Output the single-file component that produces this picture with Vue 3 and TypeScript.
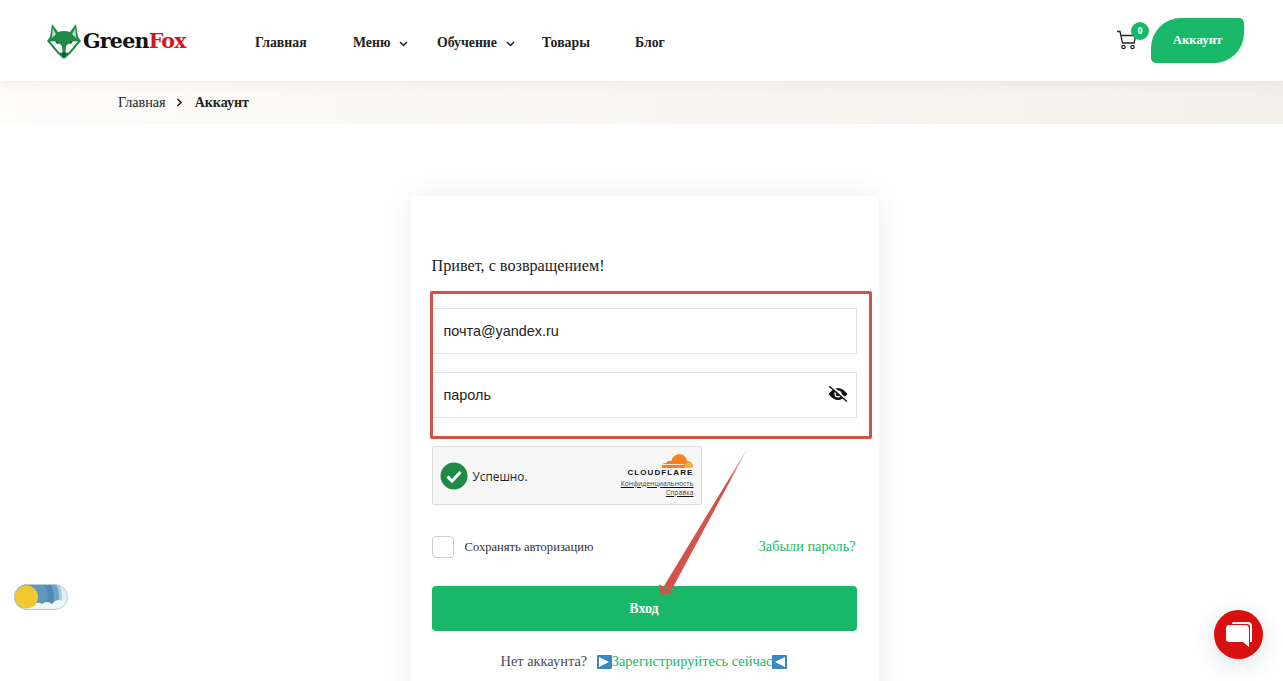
<script setup lang="ts">
interface NavItem {
  label: string
  caret?: boolean
}

const navItems: NavItem[] = [
  { label: 'Главная' },
  { label: 'Меню', caret: true },
  { label: 'Обучение', caret: true },
  { label: 'Товары' },
  { label: 'Блог' },
]
</script>

<template>
  <div class="page">
    <header class="header">
      <a class="logo">
        <svg class="fox" width="34" height="35" viewBox="0 0 34 35">
          <path d="M5 0 L11 8 Q17 6 23 8 L29 0 L31 13 L34 17 L23 30 L17 35 L11 30 L0 17 L3 13 Z" fill="#1f8a45" />
          <path d="M5.5 4 L9 10 L5 14 Z M28.5 4 L25 10 L29 14 Z" fill="#fff" opacity="0.7" />
          <path d="M3 17.5 Q10 16 15 22 L15.5 29 L12.5 28.5 Z M31 17.5 Q24 16 19 22 L18.5 29 L21.5 28.5 Z" fill="#fff" />
          <path d="M8 17 L13 19 L10 20 Z M26 17 L21 19 L24 20 Z" fill="#0f5c2c" />
          <path d="M14 29 Q17 27.5 20 29 L18 33 L16 33 Z" fill="#0f5c2c" />
        </svg>
        <span class="logo-text">Green<span class="logo-red">Fox</span></span>
      </a>
      <nav class="nav">
        <a v-for="item in navItems" :key="item.label" class="nav-item">
          {{ item.label }}
          <svg v-if="item.caret" class="caret" width="9" height="6" viewBox="0 0 9 6">
            <path d="M1 1 L4.5 4.5 L8 1" fill="none" stroke="#222" stroke-width="1.5" />
          </svg>
        </a>
      </nav>
      <div class="header-right">
        <div class="cart">
          <svg class="cart-icon" width="22" height="20" viewBox="0 0 22 20">
            <path d="M1 1.5 H4 L6.5 13 H18 L20 5.5 H5" fill="none" stroke="#222" stroke-width="1.3" />
            <circle cx="7.5" cy="17" r="1.7" fill="none" stroke="#222" stroke-width="1.3" />
            <circle cx="16.5" cy="17" r="1.7" fill="none" stroke="#222" stroke-width="1.3" />
          </svg>
          <span class="cart-badge">0</span>
        </div>
        <a class="account-btn">Аккаунт</a>
      </div>
    </header>

    <div class="crumbs">
      <span>Главная</span>
      <svg width="7" height="9" viewBox="0 0 7 9">
        <path d="M1.5 1 L5 4.5 L1.5 8" fill="none" stroke="#222" stroke-width="1.6" />
      </svg>
      <strong>Аккаунт</strong>
    </div>

    <main class="main">
      <section class="card">
        <p class="hello">Привет, с возвращением!</p>
        <div class="field">
          <input class="input" type="text" placeholder="почта@yandex.ru" />
        </div>
        <div class="field">
          <input class="input" type="text" placeholder="пароль" />
          <svg class="eye" width="20" height="16" viewBox="0 0 20 16">
            <path d="M0.5 8 Q10 -4 19.5 8 Q10 20 0.5 8 Z" fill="#111" />
            <circle cx="10" cy="8" r="3.6" fill="#fff" />
            <circle cx="10" cy="8" r="2.2" fill="#111" />
            <path d="M3.5 0.5 L19 14.5" stroke="#fff" stroke-width="2.6" />
            <path d="M1 0 L19 15.5" stroke="#111" stroke-width="1.4" />
          </svg>
        </div>

        <div class="turnstile">
          <svg width="28" height="28" viewBox="0 0 28 28">
            <circle cx="14" cy="14" r="13.5" fill="#1f8a45" />
            <path d="M7.5 14.5 L12 19 L20.5 10" fill="none" stroke="#fff" stroke-width="3" />
          </svg>
          <span class="ok">Успешно.</span>
          <div class="cf">
            <svg width="34" height="16" viewBox="0 0 34 16">
              <path d="M2 15 Q1 10 6 10 Q8 7 11 8 Q14 1 20 1 Q26 2 27 8 Q33 8 33 15 Z" fill="#f6821f" />
              <path d="M24 15 Q25 10 29 9 Q33 10 33 15 Z" fill="#fbad41" />
              <path d="M2 11.5 H24" stroke="#fff" stroke-width="0.8" />
            </svg>
            <span class="cf-name">CLOUDFLARE</span>
            <a class="cf-link">Конфиденциальность</a>
            <a class="cf-link">Справка</a>
          </div>
        </div>

        <div class="options">
          <label class="remember">
            <span class="checkbox"></span>
            Сохранять авторизацию
          </label>
          <a class="forgot">Забыли пароль?</a>
        </div>

        <button class="submit">Вход</button>

        <p class="signup">
          Нет аккаунта?
          <span class="signup-link">
            <span class="arrow-box">
              <svg width="10" height="10" viewBox="0 0 10 10"><path d="M0 0 L10 5 L0 10 Z" fill="#fff" /></svg>
            </span><a>Зарегистрируйтесь сейчас</a><span class="arrow-box">
              <svg width="10" height="10" viewBox="0 0 10 10"><path d="M10 0 L0 5 L10 10 Z" fill="#fff" /></svg>
            </span>
          </span>
        </p>
      </section>
    </main>

    <!-- пометки поверх скриншота -->
    <div class="mark-rect"></div>
    <svg class="mark-arrow" width="110" height="160" viewBox="0 0 110 160">
      <defs>
        <linearGradient id="shaft" x1="0" y1="0" x2="0" y2="1">
          <stop offset="0" stop-color="#d1534a" stop-opacity="0.15" />
          <stop offset="0.25" stop-color="#d1534a" />
        </linearGradient>
      </defs>
      <path d="M100 4 L14 146 L21 151 Z" fill="url(#shaft)" />
      <path d="M11 155 L9 144 L23 153 Z" fill="#d1534a" />
    </svg>

    <div class="theme-toggle">
      <svg width="54" height="26" viewBox="0 0 54 26">
        <defs>
          <clipPath id="pill"><rect x="0.5" y="0.5" width="53" height="25" rx="12.5" /></clipPath>
        </defs>
        <g clip-path="url(#pill)">
          <rect width="54" height="26" fill="#dfeef7" />
          <circle cx="14" cy="13" r="34" fill="#a9cde3" />
          <circle cx="14" cy="13" r="31" fill="#6ea3c8" />
          <circle cx="14" cy="13" r="26" fill="#4f8ab4" />
          <circle cx="14" cy="13" r="20" fill="#5f97bf" />
          <path d="M6 26 Q12 19 19 21 Q23 17 28 20 Q33 16 38 20 Q43 14 48 17 L54 12 V26 Z" fill="#f0f7fb" />
        </g>
        <rect x="0.5" y="0.5" width="53" height="25" rx="12.5" fill="none" stroke="#bccbd6" />
        <circle cx="12.5" cy="13" r="11.5" fill="#f0c930" />
      </svg>
    </div>

    <div class="chat">
      <svg width="28" height="28" viewBox="0 0 28 28">
        <path d="M8 1 H23 Q27 1 27 5 V21 H25 V6 Q25 3 22 3 H7 Q7 1 8 1 Z" fill="#fff" />
        <path d="M4 4 H20 Q24 4 24 8 V19 V26 L18 21 H4 Q1 21 1 18 V8 Q1 4 4 4 Z" fill="#fff" />
      </svg>
    </div>
  </div>
</template>

<style>
html,
body {
  margin: 0;
  height: 100%;
  overflow: hidden;
  background: #fff;
}
</style>

<style scoped>
.page {
  position: relative;
  height: 681px;
  overflow: hidden;
  font-family: "Liberation Serif", "Times New Roman", serif;
  color: #222;
}
.header {
  position: relative;
  z-index: 1;
  display: flex;
  align-items: center;
  height: 81px;
  padding: 0 39px 0 47px;
  background: #fff;
  box-shadow: 0 2px 10px rgba(0, 0, 0, 0.06);
}
.logo {
  display: flex;
  align-items: center;
  gap: 2px;
  width: 208px;
  margin-top: 1px;
}
.logo-text {
  font-family: "DejaVu Serif", serif;
  font-size: 20.6px;
  font-weight: 700;
  letter-spacing: -0.8px;
  color: #111;
}
.logo-red {
  color: #d8141c;
}
.nav {
  display: flex;
  align-items: center;
  margin-top: 5px;
}
.nav-item {
  display: flex;
  align-items: center;
  gap: 9px;
  font-size: 13.8px;
  font-weight: 700;
  color: #222;
}
.nav-item:nth-child(1) { width: 98px; }
.nav-item:nth-child(2) { width: 84px; }
.nav-item:nth-child(3) { width: 105px; }
.nav-item:nth-child(4) { width: 93px; }
.caret {
  margin-top: 1px;
}
.header-right {
  display: flex;
  align-items: center;
  margin-left: auto;
}
.cart {
  position: relative;
  box-sizing: border-box;
  width: 34px;
  height: 27px;
  padding-top: 3px;
}
.cart-icon {
  margin-left: -1px;
}
.cart-badge {
  position: absolute;
  top: -5px;
  left: 14px;
  width: 18px;
  height: 18px;
  border-radius: 50%;
  background: #19b868;
  color: #fff;
  font-size: 10px;
  font-weight: 700;
  line-height: 18px;
  text-align: center;
}
.account-btn {
  display: flex;
  align-items: center;
  justify-content: center;
  width: 93px;
  height: 45px;
  border-radius: 30px 5px 30px 5px;
  background: #19b868;
  color: #fff;
  font-size: 12.8px;
  font-weight: 700;
}
.crumbs {
  display: flex;
  align-items: center;
  gap: 10px;
  height: 43px;
  padding-left: 118px;
  background: linear-gradient(90deg, #fdfcfa, #f4f0e9);
  font-size: 14.2px;
}
.crumbs strong {
  margin-left: 2px;
  font-size: 14px;
}
.main {
  display: flex;
  justify-content: center;
  padding: 72px 0 0 6px;
}
.card {
  box-sizing: border-box;
  width: 468px;
  height: 560px;
  padding: 61px 22px 0 21px;
  border-radius: 4px;
  background: #fff;
  box-shadow: 0 0 30px rgba(0, 0, 0, 0.07);
}
.hello {
  margin: 0 0 32px;
  font-size: 16.2px;
  line-height: 19px;
  color: #222;
}
.field {
  position: relative;
  margin-bottom: 18px;
}
.input {
  display: block;
  box-sizing: border-box;
  width: 100%;
  height: 46px;
  padding: 0 11px;
  border: 1px solid #e3e3e3;
  background: #fff;
  font-family: "Liberation Sans", Arial, sans-serif;
  font-size: 14.4px;
  outline: none;
}
.input::placeholder {
  color: #222;
  opacity: 1;
}
.eye {
  position: absolute;
  top: 14px;
  right: 9px;
}
.turnstile {
  display: flex;
  align-items: center;
  box-sizing: border-box;
  width: 270px;
  height: 59px;
  margin-top: 28px;
  padding: 0 7px;
  border: 1px solid #dcdcdc;
  border-radius: 2px;
  background: #f7f7f7;
}
.ok {
  margin-left: 5px;
  font-family: "Open Sans", "Liberation Sans", sans-serif;
  font-size: 11.8px;
  color: #232323;
}
.cf {
  display: flex;
  flex-direction: column;
  align-items: flex-end;
  margin-top: -2px;
  margin-left: auto;
  font-family: "Open Sans", "Liberation Sans", sans-serif;
}
.cf-name {
  margin-top: -1px;
  margin-bottom: 2px;
  font-family: "Liberation Sans", sans-serif;
  font-size: 8px;
  font-weight: 700;
  letter-spacing: 1.1px;
  line-height: 9px;
  color: #111;
}
.cf-link {
  margin-top: 1px;
  font-size: 6.8px;
  line-height: 8px;
  color: #444;
  text-decoration: underline;
  text-decoration-color: #111;
}
.options {
  display: flex;
  align-items: center;
  justify-content: space-between;
  margin-top: 31px;
}
.remember {
  display: flex;
  align-items: center;
  gap: 11px;
  font-size: 12.6px;
  color: #333;
}
.checkbox {
  box-sizing: border-box;
  width: 22px;
  height: 22px;
  border: 1px solid #cfcfcf;
  border-radius: 4px;
  background: #fff;
}
.forgot {
  margin-top: -2px;
  margin-right: 1px;
  font-size: 14.3px;
  color: #19b868;
}
.submit {
  display: block;
  width: 100%;
  height: 45px;
  margin-top: 28px;
  border: 0;
  border-radius: 4px;
  background: #19b868;
  color: #fff;
  font-family: inherit;
  font-size: 14px;
  font-weight: 700;
}
.signup {
  margin: 21px 0 0;
  font-size: 14.4px;
  line-height: 18px;
  color: #4a4a55;
  text-align: center;
}
.signup-link {
  margin-left: 6px;
  color: #19b868;
}
.arrow-box {
  display: inline-flex;
  align-items: center;
  justify-content: center;
  width: 15px;
  height: 14px;
  border-radius: 1px;
  background: #3b88c3;
  vertical-align: -1px;
}
.mark-rect {
  position: absolute;
  top: 291px;
  left: 430px;
  box-sizing: border-box;
  width: 442px;
  height: 148px;
  border: 3px solid #d1534a;
  border-radius: 2px;
}
.mark-arrow {
  position: absolute;
  top: 440px;
  left: 650px;
}
.theme-toggle {
  position: absolute;
  top: 584px;
  left: 14px;
  width: 54px;
  height: 26px;
}
.chat {
  position: absolute;
  top: 610px;
  left: 1214px;
  display: flex;
  align-items: center;
  justify-content: center;
  width: 49px;
  height: 49px;
  border-radius: 50%;
  background: #d8100f;
  box-shadow: 0 6px 22px rgba(40, 70, 90, 0.16);
}
</style>
